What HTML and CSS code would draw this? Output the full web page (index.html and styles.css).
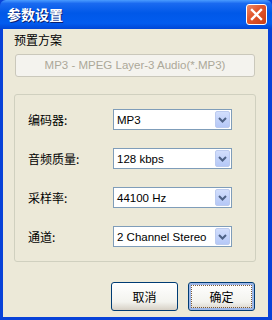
FILE: index.html
```html
<!DOCTYPE html>
<html lang="zh-CN">
<head>
  <meta charset="UTF-8">
  <meta name="viewport" content="width=device-width, initial-scale=1.0">
  <title>参数设置</title>
  <link rel="stylesheet" href="styles.css">
</head>
<body>
  <div class="window">
    <div class="titlebar">
      <span class="title">参数设置</span>
      <div class="close-btn">
        <svg width="13" height="13" viewBox="0 0 13 13">
          <path d="M2 2 L11 11 M11 2 L2 11" stroke="#fff" stroke-width="2.4" stroke-linecap="square"/>
        </svg>
      </div>
    </div>
    <div class="content">
      <div class="preset-label">预置方案</div>
      <div class="preset-box">MP3 - MPEG Layer-3 Audio(*.MP3)</div>

      <div class="group">
        <div class="row">
          <span class="label">编码器:</span>
          <div class="select"><span>MP3</span><div class="drop"><svg width="9" height="6" viewBox="0 0 9 6"><path d="M1 1 L4.5 4.5 L8 1" fill="none" stroke="#4d6185" stroke-width="2"/></svg></div></div>
        </div>
        <div class="row">
          <span class="label">音频质量:</span>
          <div class="select"><span>128 kbps</span><div class="drop"><svg width="9" height="6" viewBox="0 0 9 6"><path d="M1 1 L4.5 4.5 L8 1" fill="none" stroke="#4d6185" stroke-width="2"/></svg></div></div>
        </div>
        <div class="row">
          <span class="label">采样率:</span>
          <div class="select"><span>44100 Hz</span><div class="drop"><svg width="9" height="6" viewBox="0 0 9 6"><path d="M1 1 L4.5 4.5 L8 1" fill="none" stroke="#4d6185" stroke-width="2"/></svg></div></div>
        </div>
        <div class="row">
          <span class="label">通道:</span>
          <div class="select"><span>2 Channel Stereo</span><div class="drop"><svg width="9" height="6" viewBox="0 0 9 6"><path d="M1 1 L4.5 4.5 L8 1" fill="none" stroke="#4d6185" stroke-width="2"/></svg></div></div>
        </div>
      </div>

      <div class="buttons">
        <div class="btn">取消</div>
        <div class="btn default"><span class="focus">确定</span></div>
      </div>
    </div>
  </div>
</body>
</html>
```

FILE: styles.css
```css
body {
  margin: 0;
  font-family: "Noto Sans CJK SC", "DejaVu Sans", sans-serif;
  font-size: 12px;
  color: #000;
  background: #ece9d8;
}
.window {
  width: 272px;
  height: 320px;
  display: flex;
  flex-direction: column;
  background: #0842d8;
}
.titlebar {
  height: 29px;
  display: flex;
  align-items: center;
  justify-content: space-between;
  padding: 0 5px 0 7px;
  box-sizing: border-box;
  background: linear-gradient(to bottom, #4a9cff 0%, #1a6af0 12%, #0058e8 45%, #025cef 80%, #0046d6 100%);
  border-radius: 6px 6px 0 0;
}
.title {
  color: #fff;
  font-weight: bold;
  font-size: 14px;
  line-height: 16px;
  text-shadow: 1px 1px 0 #0a1e6e;
  margin-top: -1px;
}
.close-btn {
  width: 21px;
  height: 21px;
  box-sizing: border-box;
  border: 1px solid #fff;
  border-radius: 3px;
  background: linear-gradient(135deg, #ec8a6a 0%, #e2582f 40%, #c93d14 100%);
  display: flex;
  align-items: center;
  justify-content: center;
}
.content {
  flex: 1;
  margin: 0 4px 3px 3px;
  background: #ece9d8;
  display: flex;
  flex-direction: column;
}
.preset-label {
  margin: 4px 0 0 11px;
  line-height: 14px;
}
.preset-box {
  margin: 7px 0 0 12px;
  width: 240px;
  height: 23px;
  box-sizing: border-box;
  border: 1px solid #cac8bb;
  border-radius: 3px;
  background: #f4f3ee;
  color: #aca899;
  font-family: "Liberation Sans", sans-serif;
  font-size: 11.5px;
  line-height: 21px;
  text-align: center;
}
.group {
  margin: 17px 0 0 11px;
  width: 242px;
  height: 168px;
  box-sizing: border-box;
  border: 1px solid #d0d0bf;
  border-radius: 3px;
  padding: 14px 0 0 13px;
  display: flex;
  flex-direction: column;
  gap: 18px;
}
.row {
  display: flex;
  align-items: center;
  height: 21px;
}
.label {
  width: 85px;
}
.select {
  width: 119px;
  height: 21px;
  box-sizing: border-box;
  border: 1px solid #7f9db9;
  background: #fff;
  display: flex;
  align-items: center;
  justify-content: space-between;
  padding: 0 1px 0 3px;
  font-family: "Liberation Sans", sans-serif;
  font-size: 11.5px;
}
.drop {
  width: 15px;
  height: 17px;
  box-sizing: border-box;
  border: 1px solid #bccbef;
  border-radius: 2px;
  background: linear-gradient(to bottom, #d2defc, #b5c8f7);
  display: flex;
  align-items: center;
  justify-content: center;
}
.buttons {
  margin: 20px 13px 0 0;
  display: flex;
  justify-content: flex-end;
  gap: 10px;
}
.btn {
  width: 67px;
  height: 29px;
  box-sizing: border-box;
  border: 1px solid #003c74;
  border-radius: 3px;
  background: linear-gradient(to bottom, #ffffff, #f3f3ee 70%, #d6d0c5);
  display: flex;
  align-items: center;
  justify-content: center;
  font-size: 12px;
}
.btn.default {
  box-shadow: inset 0 0 0 2px #9db7e8;
}
.focus {
  width: 61px;
  height: 23px;
  box-sizing: border-box;
  border: 1px dotted #7a5a3a;
  display: flex;
  align-items: center;
  justify-content: center;
}
```
